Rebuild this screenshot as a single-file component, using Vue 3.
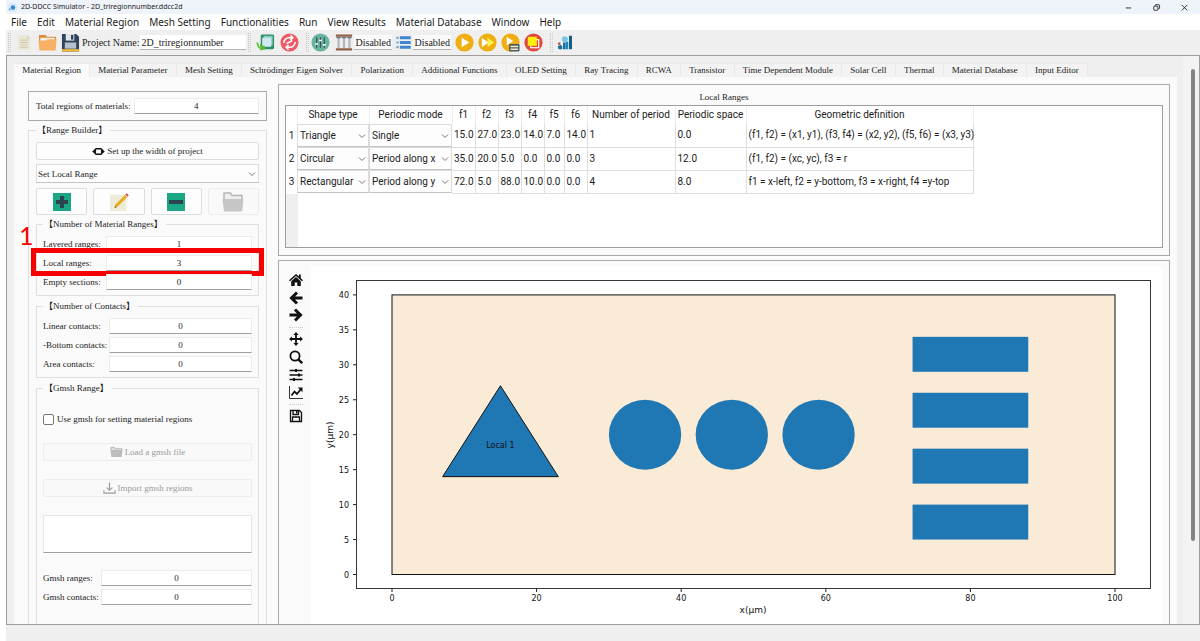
<script setup>
import { ref } from 'vue'

const menus = ['File', 'Edit', 'Material Region', 'Mesh Setting', 'Functionalities', 'Run', 'View Results', 'Material Database', 'Window', 'Help']
const tabs = ['Material Region', 'Material Parameter', 'Mesh Setting', 'Schrödinger Eigen Solver', 'Polarization', 'Additional Functions', 'OLED Setting', 'Ray Tracing', 'RCWA', 'Transistor', 'Time Dependent Module', 'Solar Cell', 'Thermal', 'Material Database', 'Input Editor']
const activeTab = ref('Material Region')

const project = ref('2D_triregionnumber')
const total = ref('4')
const rangeMode = ref('Set Local Range')
const useGmsh = ref(false)
const notes = ref('')

const ranges = ref([
  { id: 'layered', label: 'Layered ranges:', value: '1' },
  { id: 'local', label: 'Local ranges:', value: '3' },
  { id: 'empty', label: 'Empty sections:', value: '0' },
])
const contacts = ref([
  { id: 'linear', label: 'Linear contacts:', value: '0' },
  { id: 'bottom', label: '-Bottom contacts:', value: '0' },
  { id: 'area', label: 'Area contacts:', value: '0' },
])
const gmsh = ref([
  { id: 'granges', label: 'Gmsh ranges:', value: '0' },
  { id: 'gcontacts', label: 'Gmsh contacts:', value: '0' },
])

const headers = ['Shape type', 'Periodic mode', 'f1', 'f2', 'f3', 'f4', 'f5', 'f6', 'Number of period', 'Periodic space', 'Geometric definition']
const shapes = ['Triangle', 'Circular', 'Rectangular']
const modes = ['Single', 'Period along x', 'Period along y']
const rows = ref([
  { shape: 'Triangle', mode: 'Single', cells: ['15.0', '27.0', '23.0', '14.0', '7.0', '14.0', '1', '0.0', '(f1, f2) = (x1, y1), (f3, f4) = (x2, y2), (f5, f6) = (x3, y3)'] },
  { shape: 'Circular', mode: 'Period along x', cells: ['35.0', '20.0', '5.0', '0.0', '0.0', '0.0', '3', '12.0', '(f1, f2) = (xc, yc), f3 = r'] },
  { shape: 'Rectangular', mode: 'Period along y', cells: ['72.0', '5.0', '88.0', '10.0', '0.0', '0.0', '4', '8.0', 'f1 = x-left, f2 = y-bottom, f3 = x-right, f4 =y-top'] },
])

// Plot scale: data units (µm) to canvas units
const KX = 7.23
const KY = 6.99
const px = (x) => 81 + x * KX
const py = (y) => 307.5 - y * KY
const xTicks = [0, 20, 40, 60, 80, 100]
const yTicks = [0, 5, 10, 15, 20, 25, 30, 35, 40]
const triangle = [[7, 14], [15, 27], [23, 14]].map(([x, y]) => `${px(x)},${py(y)}`).join(' ')
const circles = [35, 47, 59]
const bars = [10, 18, 26, 34]
</script>

<template>
  <div class="app">
    <header class="titlebar">
      <svg class="logo" viewBox="0 0 12 12"><circle cx="6" cy="6" r="5.5" fill="#dbe9f7" /><circle cx="6.5" cy="6" r="2.4" fill="#2f86e0" /><circle cx="3" cy="8" r="1" fill="#4a9be8" /></svg>
      <span class="title">2D-DDCC Simulator - 2D_triregionnumber.ddcc2d</span>
      <button class="winbtn" aria-label="Minimize"><svg viewBox="0 0 10 10"><path d="M2 5.5h6" /></svg></button>
      <button class="winbtn" aria-label="Restore"><svg viewBox="0 0 10 10"><rect x="2" y="3.5" width="4.6" height="4.6" rx="1" /><path d="M3.6 3.2V2.8q0-1 1-1h2.4q1.4 0 1.4 1.4v2.2q0 1-1 1h-.4" /></svg></button>
      <button class="winbtn" aria-label="Close"><svg viewBox="0 0 10 10"><path d="M2 2.2l6 6M8 2.2l-6 6" /></svg></button>
    </header>

    <nav class="menubar">
      <button v-for="m in menus" :key="m">{{ m }}</button>
    </nav>

    <div class="toolbar">
      <i class="grip"></i>
      <button class="tb file" aria-label="New"><svg viewBox="0 0 20 20"><path d="M3 1h11l4 4v14H3z" fill="#ebe7d3" /><path d="M14 1v4h4z" fill="#d0ccb8" /><path d="M5 7h10M5 10h10M5 13h10M5 16h10" stroke="#c5c1aa" stroke-width="1" /></svg></button>
      <button class="tb" aria-label="Open"><svg viewBox="0 0 20 20"><path d="M1 2h7l1.500 2H19v8H1z" fill="#d98c3c" /><path d="M2.500 5h15v5h-15z" fill="#f7f3ea" /><path d="M.5 8h8l1-1.500h10L18.5 18.500h-17z" fill="#f7b064" /></svg></button>
      <button class="tb save" aria-label="Save"><svg viewBox="0 0 20 20"><path d="M1 1h15l3 3v15.500H1z" fill="#30435a" /><rect x="5" y="1" width="9" height="7" fill="#dfe5ea" /><rect x="10.500" y="2" width="2.500" height="5" fill="#30435a" /><rect x="4" y="10" width="12" height="6.500" fill="#b6c0c8" /><rect x="1" y="17" width="18" height="2.500" fill="#f2bb38" /></svg></button>
      <label for="project" class="tlabel">Project Name:</label>
      <input id="project" v-model="project" class="field name" />
      <i class="grip"></i>
      <button class="tb copy" aria-label="Reload structure"><svg viewBox="0 0 20 20"><rect x="5" y="1.500" width="14" height="15.500" rx="1.500" fill="#2c8f6a" /><path d="M8 3h9.500v10H8z" fill="#8fd0b8" /><rect x="6.500" y="5" width="9.500" height="9.500" fill="#cfe8f2" /><path d="M.5 10c0 5 3 8 9 8v-4.500L6 15.500C3.500 15 2.500 13 2.500 10z" fill="#6cc644" /><path d="M4 11l6 4-5 4z" fill="#57b935" /></svg></button>
      <button class="tb sync" aria-label="Refresh"><svg viewBox="0 0 20 20"><circle cx="10" cy="10" r="9.500" fill="#ee5a67" /><g fill="none" stroke="#fff" stroke-width="1.600"><path d="M4 10.500C4 7 7 5 9.500 5H13M11 2.500l2.500 2.500L11 7.500M16 9.500c0 3.500-3 5.500-5.500 5.500H7M9 12.500L6.500 15 9 17.500M7 11l6-3" /></g></svg></button>
      <i class="grip wide"></i>
      <button class="tb" aria-label="Parameters"><svg viewBox="0 0 20 20"><circle cx="10" cy="10" r="9.500" fill="#68b59f" /><path d="M6 4.500v11M10 4.500v11M14 4.500v11" stroke="#37505a" stroke-width="1.300" /><path d="M4.500 11.500h3M8.500 8h3M12.500 12.500h3" stroke="#fff" stroke-width="1.600" /></svg></button>
      <button class="tb cols" aria-label="Columns"><svg viewBox="0 0 20 20"><path d="M1 1h18v2.600H1zM1 16.400h18V19H1z" fill="#8f5f47" /><path d="M4 4v12M10 4v12M16 4v12" stroke="#b3b7bd" stroke-width="2.400" /><path d="M1.500 4.500h5M7.500 4.500h5M13.500 4.500h5" stroke="#70757c" stroke-width="1.400" /></svg></button>
      <input class="field state" value="Disabled" readonly aria-label="Column mode" />
      <button class="tb list" aria-label="List"><svg viewBox="0 0 20 18"><path d="M5 2.500h15M5 9h15M5 15.500h15" stroke="#3f86d0" stroke-width="4" /><path d="M0 2.500h3.500M0 9h3.500M0 15.500h3.500" stroke="#8aa9cc" stroke-width="3" /></svg></button>
      <input class="field state" value="Disabled" readonly aria-label="List mode" />
      <button class="tb run" aria-label="Run"><svg viewBox="0 0 20 20"><circle cx="10" cy="10" r="9.600" fill="#efae12" /><path d="M7 5l8 5-8 5z" fill="#fff" /></svg></button>
      <button class="tb run" aria-label="Run all"><svg viewBox="0 0 20 20"><circle cx="10" cy="10" r="9.600" fill="#efae12" /><path d="M4 5l7 5-7 5z" fill="#fff" /><path d="M10 5l7 5-7 5z" fill="#fff34a" /></svg></button>
      <button class="tb run" aria-label="Run queue"><svg viewBox="0 0 20 20"><circle cx="10" cy="10" r="9.600" fill="#efae12" /><path d="M6 4l7 4.500L6 13z" fill="#fff" /><rect x="8.500" y="11.500" width="11" height="8" rx="1" fill="#4a5d66" /><path d="M10 14.300h8M10 17h8" stroke="#f3edc4" stroke-width="1.600" /></svg></button>
      <button class="tb run" aria-label="Stop"><svg viewBox="0 0 20 20"><circle cx="10" cy="10" r="9.600" fill="#e0493f" /><rect x="7" y="7" width="8.500" height="8.500" fill="none" stroke="#fff" stroke-width="1.200" /><rect x="4" y="4" width="9.500" height="9.500" fill="#ffee0d" /></svg></button>
      <i class="grip last"></i>
      <button class="tb chart" aria-label="Results"><svg viewBox="0 0 20 20"><path d="M8 19v-9h3.500v9zM1 15l4-2 2 2v4H2z" fill="#1f6f9c" /><rect x="11.500" y="9" width="3.500" height="10" fill="#1c8ab8" /><rect x="16" y="1" width="4" height="18" fill="#135f8a" /><circle cx="10.500" cy="5.500" r="4" fill="#7cc7e6" /><circle cx="3" cy="11.500" r="1.800" fill="#b05a4a" /></svg></button>
    </div>

    <main class="frame">
      <div class="content">
        <div class="tabs" role="tablist">
          <button v-for="t in tabs" :key="t" role="tab" :aria-selected="t === activeTab" :class="{ active: t === activeTab }" @click="activeTab = t">{{ t }}</button>
        </div>

        <div class="page">
          <aside class="side">
            <div class="total">
              <label for="total">Total regions of materials:</label>
              <input id="total" v-model="total" class="num" />
            </div>

            <fieldset class="builder">
              <legend>【Range Builder】</legend>
              <button class="btn"><svg class="widthicon" viewBox="0 0 14 10"><rect x="3.500" y="2" width="7" height="6" rx="1" fill="none" stroke="#111" stroke-width="1.600" /><path d="M0 5l3-2.800v5.600zM14 5l-3-2.800v5.600z" fill="#111" /></svg>Set up the width of project</button>
              <div class="combo main-combo">
                <select v-model="rangeMode" aria-label="Range mode"><option>Set Local Range</option></select>
                <svg viewBox="0 0 8 8"><path d="M1 2.500l3 3 3-3" /></svg>
              </div>
              <div class="actions">
                <button class="btn" aria-label="Add"><svg viewBox="0 0 20 20"><rect x="1" y="1" width="18" height="18" fill="#1ba784" /><path d="M10 4v12M4 10h12" stroke="#2c4350" stroke-width="4" /></svg></button>
                <button class="btn" aria-label="Edit"><svg viewBox="0 0 22 22"><rect x="1" y="3" width="18" height="18" fill="#eeebd9" /><path d="M6 17.500l1.200-4L17.500 3.200l2.600 2.600L9.500 16.200z" fill="#eeb62c" /><path d="M8.500 14.800L18.600 4.500" stroke="#d89b18" /><path d="M6 17.500l.8-2.600 1.900 1.800z" fill="#8a6a3a" /><path d="M18 2.700l1.500-1.300 2.200 2.300-1.400 1.400z" fill="#d2474c" /></svg></button>
                <button class="btn" aria-label="Remove"><svg viewBox="0 0 20 20"><rect x="1" y="1" width="18" height="18" fill="#1ba784" /><path d="M3 10h14" stroke="#2c4350" stroke-width="4" /></svg></button>
                <button class="btn off" disabled aria-label="Folder"><svg class="folder" viewBox="0 0 22 20"><path d="M2 8V1h6.500l1.500 2.500h10V8" fill="#eee" stroke="#b5b5b5" stroke-width="1.500" /><path d="M.5 7h21L20 19.500H2z" fill="#c6c6c6" /></svg></button>
              </div>

              <fieldset class="group">
                <legend>【Number of Material Ranges】</legend>
                <div v-for="r in ranges" :key="r.id" class="row">
                  <label :for="r.id" class="w-range">{{ r.label }}</label>
                  <input :id="r.id" v-model="r.value" class="num" />
                  <template v-if="r.id === 'local'">
                    <span class="mark"></span>
                    <span class="step">1</span>
                  </template>
                </div>
              </fieldset>

              <fieldset class="group">
                <legend>【Number of Contacts】</legend>
                <div v-for="r in contacts" :key="r.id" class="row">
                  <label :for="r.id" class="w-contact">{{ r.label }}</label>
                  <input :id="r.id" v-model="r.value" class="num" />
                </div>
              </fieldset>

              <fieldset class="group gmsh">
                <legend>【Gmsh Range】</legend>
                <label class="check"><input v-model="useGmsh" type="checkbox" />Use gmsh for setting material regions</label>
                <button class="btn off" disabled><svg viewBox="0 0 14 12"><path d="M1 4V1h4l1 1.500h7V4" fill="#ddd" stroke="#b5b5b5" /><path d="M.5 3.800h13L12.500 11.500h-11z" fill="#bdbdbd" /></svg>Load a gmsh file</button>
                <button class="btn off" disabled><svg viewBox="0 0 14 12"><path d="M7 0v8.500M4 5.500l3 3 3-3M1 8.500v3h12v-3" fill="none" stroke="#999" stroke-width="1.200" /></svg>Import gmsh regions</button>
                <textarea v-model="notes" aria-label="Gmsh regions"></textarea>
                <div class="pair">
                  <div v-for="r in gmsh" :key="r.id" class="row">
                    <label :for="r.id" class="w-gmsh">{{ r.label }}</label>
                    <input :id="r.id" v-model="r.value" class="num" />
                  </div>
                </div>
              </fieldset>
            </fieldset>
          </aside>

          <section class="work">
            <div class="panel local">
              <h2>Local Ranges</h2>
              <div class="tablebox">
                <table>
                  <colgroup>
                    <col class="c-idx" /><col class="c-shape" /><col class="c-mode" />
                    <col class="c-f" /><col class="c-f" /><col class="c-f" /><col class="c-f" /><col class="c-f5" /><col class="c-f" />
                    <col class="c-num" /><col class="c-space" /><col class="c-geo" />
                  </colgroup>
                  <thead>
                    <tr><th></th><th v-for="h in headers" :key="h" scope="col">{{ h }}</th></tr>
                  </thead>
                  <tbody>
                    <tr v-for="(r, i) in rows" :key="i">
                      <th scope="row">{{ i + 1 }}</th>
                      <td class="cc"><div class="combo"><select v-model="r.shape" aria-label="Shape type"><option v-for="s in shapes" :key="s">{{ s }}</option></select><svg viewBox="0 0 8 8"><path d="M1 2.500l3 3 3-3" /></svg></div></td>
                      <td class="cc"><div class="combo"><select v-model="r.mode" aria-label="Periodic mode"><option v-for="s in modes" :key="s">{{ s }}</option></select><svg viewBox="0 0 8 8"><path d="M1 2.500l3 3 3-3" /></svg></div></td>
                      <td v-for="(c, j) in r.cells" :key="j">{{ c }}</td>
                    </tr>
                  </tbody>
                </table>
                <div class="gutter"></div>
              </div>
            </div>

            <div class="panel plot">
              <div class="plottools">
                <button aria-label="Home"><svg viewBox="0 0 14 14"><path d="M7 1L0 7.200l1 1L7 3l6 5.200 1-1-2.200-2V1.500H10v2z" /><path d="M2.200 8.200L7 4.100l4.800 4.100V13H8.300V9.500H5.700V13H2.200z" /></svg></button>
                <button aria-label="Back"><svg viewBox="0 0 14 14"><path d="M8 1.500L2.500 7 8 12.500M3 7h10.500" class="arrow" /></svg></button>
                <button aria-label="Forward" class="sep"><svg viewBox="0 0 14 14"><path d="M6 1.500L11.500 7 6 12.500M11 7H.5" class="arrow" /></svg></button>
                <button aria-label="Pan"><svg viewBox="0 0 14 14"><path d="M7 0l2.600 3H7.900v3.100H11V4.400L14 7l-3 2.600V7.900H7.900V11h1.700L7 14l-2.600-3h1.700V7.900H3v1.700L0 7l3-2.600v1.700h3.100V3H4.400z" /></svg></button>
                <button aria-label="Zoom"><svg viewBox="0 0 14 14"><circle cx="6" cy="6" r="4.600" class="ln" /><path d="M9.300 9.300l3.900 3.900" class="ln thick" /></svg></button>
                <button aria-label="Subplots"><svg viewBox="0 0 14 14"><path d="M.5 2.500h13M.5 7h13M.5 11.500h13" class="thin strong" /><path d="M6 1h2v3H6zM9 5.500h2v3H9zM4 10h2v3H4z" /></svg></button>
                <button aria-label="Axes" class="sep"><svg viewBox="0 0 14 14"><path d="M.5 1v12.500H14" class="thin" /><path d="M2.500 10.500l3-4 2.500 2.500L12 4" class="ln" /><path d="M8.800 2.500h4.700v4.700z" /></svg></button>
                <button aria-label="Save figure"><svg viewBox="0 0 14 14"><path d="M1.500 1.500h9l2 2v9h-11z" class="thin strong" /><path d="M4 1.500v4h5.500v-4M3.500 12.500v-4.500h7v4.500" class="thin strong" /><path d="M7 2h1.500v2.500H7z" /></svg></button>
              </div>
              <svg class="canvas" viewBox="0 0 851 355" preserveAspectRatio="xMidYMin meet">
                <rect x="45.500" y="13.500" width="794" height="308" fill="none" stroke="#222" stroke-width="0.900" />
                <rect :x="px(0)" :y="py(40)" :width="100 * KX" :height="40 * KY" fill="#faebd7" stroke="#111" />
                <polygon :points="triangle" fill="#1f77b4" stroke="#111" stroke-width="1" />
                <text :x="px(15)" y="181" text-anchor="middle">Local 1</text>
                <ellipse v-for="c in circles" :key="c" :cx="px(c)" :cy="py(20)" :rx="5 * KX" :ry="5 * KY" fill="#1f77b4" />
                <rect v-for="b in bars" :key="b" :x="px(72)" :y="py(b)" :width="16 * KX" :height="5 * KY" fill="#1f77b4" />
                <g v-for="t in xTicks" :key="'x' + t">
                  <line :x1="px(t)" :x2="px(t)" y1="322" y2="325" stroke="#222" />
                  <text :x="px(t)" y="334" text-anchor="middle">{{ t }}</text>
                </g>
                <g v-for="t in yTicks" :key="'y' + t">
                  <line x1="42" x2="45" :y1="py(t)" :y2="py(t)" stroke="#222" />
                  <text x="38" :y="py(t) + 3" text-anchor="end">{{ t }}</text>
                </g>
                <text class="axis" x="442" y="346" text-anchor="middle">x(μm)</text>
                <text class="axis" transform="translate(22 168) rotate(-90)" text-anchor="middle">y(μm)</text>
              </svg>
            </div>
          </section>
        </div>
      </div>
      <div class="scroll"><span></span></div>
    </main>
    <footer class="status"></footer>
  </div>
</template>

<style>
html, body { margin: 0; background: #fff; }
</style>

<style scoped>
* { box-sizing: border-box; }
button, input, select, textarea { font: inherit; color: inherit; margin: 0; padding: 0; border: 0; background: none; border-radius: 0; outline: 0; }
fieldset { min-width: 0; margin: 0; padding: 0; border: 1px solid #dfdfdf; }
.app { height: 100vh; display: flex; flex-direction: column; padding-left: 6px; overflow: hidden; color: #1c1c1c; font: 9px/12px "Liberation Serif", "Noto Sans CJK TC", serif; }

.titlebar { flex: none; height: 14px; display: flex; align-items: center; background: #eff3fa; font: 7px/12px "Noto Sans", sans-serif; }
.logo { width: 11px; height: 11px; margin: 0 3px 0 1px; }
.title { flex: 1; white-space: nowrap; }
.winbtn { width: 28px; height: 12px; display: flex; align-items: center; justify-content: center; }
.winbtn svg { width: 9px; height: 9px; fill: none; stroke: #222; stroke-width: 1; }
.winbtn:last-child { margin-right: 2px; }

.menubar { flex: none; height: 16px; display: flex; align-items: center; gap: 10px; padding-left: 5px; background: #fff; font: 10px/16px "Noto Sans", sans-serif; }
.menubar button { white-space: nowrap; }

.toolbar { flex: none; height: 25px; display: flex; align-items: center; padding-left: 2px; background: #efefef; font-size: 10px; }
.grip { width: 3px; height: 19px; margin-right: 5px; border-left: 1px dotted #c0c0c0; border-right: 1px dotted #cecece; }
.grip.wide { margin-left: 3px; margin-right: 2px; }
.grip.last { margin-left: 3px; margin-right: 3px; }
.tb { flex: none; width: 19px; height: 19px; margin-right: 4px; }
.tb svg { display: block; width: 100%; height: 100%; }
.tb.file { width: 16px; height: 17px; margin-right: 6px; }
.tb.save { margin-right: 2px; }
.tb.copy { margin-right: 5px; }
.tb.cols { width: 18px; margin-left: 1px; margin-right: 1px; }
.tb.list { width: 15px; height: 13px; margin-right: 2px; }
.tb.chart { width: 17px; height: 15px; margin-right: 0; }
.tlabel { white-space: nowrap; margin-right: 1px; }
.field { background: #fff; border-bottom: 1px solid #b4b4b4; height: 15px; }
.field.name { width: 106px; margin-right: 2px; padding-left: 1px; }
.field.state { width: 38px; margin-right: 4px; padding-left: 1px; background: #fafafa; }

.frame { flex: 1; min-height: 0; display: flex; border: 1px solid #9d9d9d; background: #efefef; }
.content { flex: 1; min-width: 0; display: flex; flex-direction: column; padding: 7px 6px 0 7px; }
.tabs { flex: none; display: flex; height: 14px; max-width: 1074px; }
.tabs button { flex: 1 1 auto; padding: 0 6px; background: #f3f3f3; border: 1px solid #eaeaea; border-width: 1px 1px 0 0; white-space: nowrap; line-height: 13px; }
.tabs button.active { background: #fafafa; }
.page { flex: 1; min-height: 0; display: flex; background: #fafafa; padding: 0 7px 0 14px; gap: 11px; overflow: hidden; }

.side { flex: 0 0 239px; display: flex; flex-direction: column; padding-top: 14px; }
.total { flex: none; height: 30px; display: flex; align-items: center; gap: 3px; padding: 0 7px; border: 1px solid #a9a9a9; white-space: nowrap; }
.num { flex: 1; min-width: 0; height: 16px; text-align: center; background: #fff; border: 1px solid #ececec; border-bottom-color: #a0a0a0; border-radius: 1px; }
.builder { flex: none; margin-top: 3px; padding: 6px 7px 60px; }
legend { height: 12px; padding: 0 3px 0 1px; line-height: 12px; white-space: nowrap; }
.btn { width: 100%; height: 18px; display: flex; align-items: center; justify-content: center; gap: 2px; background: #fdfdfd; border: 1px solid #dcdcdc; border-radius: 2px; white-space: nowrap; }
.btn.off { color: #9a9a9a; background: #f9f9f9; border-color: #ececec; }
.widthicon { width: 13px; height: 9px; }
.combo { position: relative; }
.combo select { appearance: none; display: block; width: 100%; height: 100%; padding-left: 2px; background: #fdfdfd; border: 1px solid #dcdcdc; border-bottom-color: #c4c4c4; }
.combo svg { position: absolute; right: 3px; top: 50%; width: 8px; height: 8px; margin-top: -4px; fill: none; stroke: #777; pointer-events: none; }
.main-combo { height: 19px; margin: 4px 0 5px; }
.main-combo select { padding-left: 1px; }
.actions { display: grid; grid-template-columns: repeat(4, 1fr); gap: 6px; }
.actions .btn { height: 27px; }
.actions svg { width: 20px; height: 20px; }
.actions .folder { width: 22px; height: 20px; }
.group { margin: 4px 0 0; padding: 6px 6px 5px; display: block; }
.actions + .group { margin-top: 3px; }
.row { position: relative; display: flex; align-items: center; height: 16px; margin-bottom: 3px; }
.row:last-child { margin-bottom: 0; }
.row label { flex: none; white-space: nowrap; }
.w-range { width: 63px; }
.w-contact { width: 66px; }
.w-gmsh { width: 58px; }
.mark { position: absolute; left: -12px; right: -12px; top: -7px; height: 28px; border: 5px solid #f60000; }
.step { position: absolute; left: -24px; top: -35px; font: 25px/30px Lato, sans-serif; color: #f60000; }
.gmsh { padding-top: 19px; padding-bottom: 60px; }
.check { display: flex; align-items: center; gap: 3px; height: 12px; white-space: nowrap; }
.check input { appearance: none; width: 11px; height: 11px; border: 1px solid #777; border-radius: 2px; background: #fff; }
.gmsh .btn { margin-top: 18px; }
.gmsh .btn svg { width: 13px; height: 12px; }
textarea { display: block; width: 100%; height: 38px; margin-top: 18px; resize: none; background: #fff; border: 1px solid #e6e6e6; border-bottom-color: #a0a0a0; }
.pair { margin-top: 17px; }

.work { flex: 1; min-width: 0; display: flex; flex-direction: column; gap: 4px; padding-top: 7px; }
.panel { border: 1px solid #a9a9a9; }
.local { flex: none; height: 172px; padding: 6px 6px 7px; display: flex; flex-direction: column; }
h2 { margin: 0 0 2px; font-size: 9px; line-height: 12px; font-weight: 400; text-align: center; }
.tablebox { flex: 1; display: flex; flex-direction: column; align-items: flex-start; border: 1px solid #9d9d9d; background: #fff; overflow: hidden; font: 10px/14px Roboto, sans-serif; }
.gutter { flex: 1; width: 12px; background: #efefef; }
table { flex: none; border-collapse: collapse; table-layout: fixed; width: 687px; }
.c-idx { width: 11px; } .c-shape { width: 72px; } .c-mode { width: 83px; } .c-f { width: 23px; } .c-f5 { width: 20px; }
.c-num { width: 88px; } .c-space { width: 71px; } .c-geo { width: 227px; }
th { padding: 0; font-weight: 400; white-space: nowrap; text-align: center; }
thead th { height: 18px; border-right: 1px solid #eee; }
td { height: 23px; padding: 0 0 0 2px; white-space: nowrap; border-right: 1px solid #dedede; border-bottom: 1px solid #dedede; }
td.cc { padding: 0; border: 0; }
.cc .combo { height: 23px; }

.plot { flex: 1; min-height: 0; display: flex; padding: 6px 7px 0 6px; border-bottom: 0; }
.plottools { flex: none; width: 26px; display: flex; flex-direction: column; align-items: flex-start; padding: 5px 0 0 4px; gap: 3px; }
.plottools button { width: 14px; height: 15px; }
.plottools button.sep { display: flex; align-items: flex-start; height: 20px; border-bottom: 1px dotted #ccc; }
.plottools svg { display: block; width: 14px; height: 14px; fill: #111; }
.plottools .arrow { fill: none; stroke: #111; stroke-width: 3; }
.plottools .ln { fill: none; stroke: #111; stroke-width: 1.8; }
.plottools .thick { stroke-width: 2.4; }
.plottools .thin { fill: none; stroke: #333; stroke-width: 1; }
.plottools .strong { stroke: #111; stroke-width: 1.3; }
.canvas { flex: 1; min-width: 0; height: 100%; background: #fff; }
.canvas text { font: 8px "DejaVu Sans", sans-serif; fill: #111; }
.canvas .axis { font-size: 9px; }

.scroll { flex: none; width: 16px; padding: 13px 0 0 8px; background: #f3f3f3; }
.scroll span { display: block; width: 4px; height: 85%; background: #858585; border-radius: 2px; }
.status { flex: none; height: 16px; background: #efefef; }
</style>
